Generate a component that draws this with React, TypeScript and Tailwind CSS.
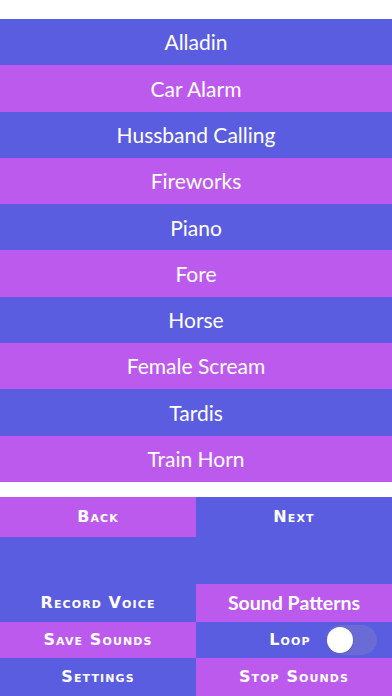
const sounds = [
  "Alladin",
  "Car Alarm",
  "Hussband Calling",
  "Fireworks",
  "Piano",
  "Fore",
  "Horse",
  "Female Scream",
  "Tardis",
  "Train Horn",
];

const blue = "bg-[#5b5de1]";
const purple = "bg-[#bd5aee]";

function Caps({ children }: { children: string }) {
  return (
    <span className="font-['DejaVu_Sans',sans-serif] text-[16px] font-bold tracking-[1.1px] text-white [font-variant:small-caps]">
      {children}
    </span>
  );
}

export default function App() {
  return (
    <div className="flex h-[696px] w-[392px] flex-col overflow-hidden bg-white">
      <div className="h-[19px] shrink-0" />
      <div className="flex flex-col">
        {sounds.map((name, i) => (
          <div
            key={name}
            className={`flex h-[46.3px] items-center justify-center font-['Lato',sans-serif] text-[21px] text-white ${
              i % 2 === 0 ? blue : purple
            }`}
          >
            {name}
          </div>
        ))}
      </div>
      <div className="h-[15px] shrink-0" />
      <div className={`flex flex-1 flex-col ${blue}`}>
        <div className="grid h-[40px] grid-cols-2">
          <div className={`flex items-center justify-center ${purple}`}>
            <Caps>Back</Caps>
          </div>
          <div className="flex items-center justify-center">
            <Caps>Next</Caps>
          </div>
        </div>
        <div className="h-[47px]" />
        <div className="grid grid-cols-2">
          <div className="flex h-[38px] items-center justify-center">
            <Caps>Record Voice</Caps>
          </div>
          <div className={`flex h-[38px] items-center justify-center ${purple}`}>
            <span className="font-['Lato',sans-serif] text-[19.5px] font-bold text-white">Sound Patterns</span>
          </div>
          <div className={`flex h-[36px] items-center justify-center ${purple}`}>
            <Caps>Save Sounds</Caps>
          </div>
          <div className="relative flex h-[36px] items-center justify-center">
            <span className="mr-[8px]">
              <Caps>Loop</Caps>
            </span>
            <div className="absolute right-[15px] top-[3px] h-[30px] w-[51px] rounded-full bg-[#6b6bd6]">
              <div className="absolute left-[1px] top-[2px] h-[26px] w-[26px] rounded-full bg-white shadow" />
            </div>
          </div>
          <div className="flex h-[38px] items-center justify-center">
            <Caps>Settings</Caps>
          </div>
          <div className={`flex h-[38px] items-center justify-center ${purple}`}>
            <Caps>Stop Sounds</Caps>
          </div>
        </div>
      </div>
    </div>
  );
}
